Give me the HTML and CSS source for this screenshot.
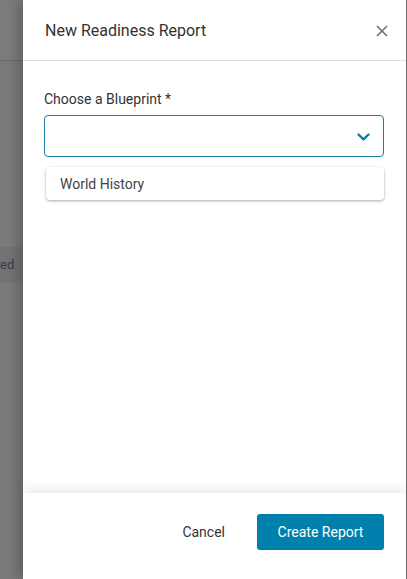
FILE: index.html
```html
<!DOCTYPE html>
<html>
<head>
<meta charset="utf-8">
<link rel="stylesheet" href="styles.css">
</head>
<body>
<div class="page">
  <div class="backdrop">
    <div class="bd-header"></div>
    <div class="bd-spacer"></div>
    <div class="bd-row">ed</div>
  </div>
  <div class="panel">
    <div class="panel-header">
      <div class="title">New Readiness Report</div>
      <svg class="close" width="12" height="12" viewBox="0 0 12 12"><path d="M1 1 L11 11 M11 1 L1 11" stroke="#6b6b6b" stroke-width="1.5" fill="none"/></svg>
    </div>
    <div class="panel-body">
      <div class="label">Choose a Blueprint *</div>
      <div class="select">
        <svg class="chev" width="13" height="8" viewBox="0 0 13 8"><path d="M1.5 1.5 L6.5 6.3 L11.5 1.5" stroke="#0a7ead" stroke-width="2.4" fill="none" stroke-linecap="round" stroke-linejoin="round"/></svg>
      </div>
      <div class="menu">
        <div class="menu-item">World History</div>
      </div>
    </div>
    <div class="panel-footer">
      <button class="btn-cancel">Cancel</button>
      <button class="btn-primary">Create Report</button>
    </div>
  </div>
  <div class="edge"></div>
</div>
</body>
</html>
```
FILE: styles.css
```css
html, body {
  margin: 0;
  padding: 0;
  height: 100%;
}
body {
  font-family: Roboto, "Liberation Sans", sans-serif;
  color: #333;
  overflow: hidden;
}
.page {
  display: flex;
  height: 579px;
}
.backdrop {
  width: 23px;
  flex: none;
  background: #7a7a7a;
  display: flex;
  flex-direction: column;
  overflow: hidden;
}
.bd-header {
  height: 60px;
  border-bottom: 1px solid #6a6a6a;
  background: #7b7b7b;
}
.bd-spacer {
  height: 186px;
}
.bd-row {
  height: 36px;
  background: #737373;
  font-size: 13px;
  line-height: 36px;
  color: #3a3a4a;
  white-space: nowrap;
  padding-left: 0;
}
.panel {
  flex: 1;
  background: #fff;
  display: flex;
  flex-direction: column;
  box-shadow: -6px 0 10px rgba(0,0,0,0.18);
  position: relative;
  z-index: 1;
}
.panel-header {
  height: 60px;
  border-bottom: 1px solid #dedede;
  display: flex;
  align-items: center;
  justify-content: space-between;
  padding: 0 18px 0 21px;
  flex: none;
}
.title {
  font-size: 16px;
  color: #333;
  padding-left: 1px;
  padding-top: 1px;
}
.close {
  display: block;
  margin-top: 2px;
}
.panel-body {
  flex: 1;
  padding: 28px 22px 0 21px;
}
.label {
  font-size: 14px;
  line-height: 20px;
  color: #333;
  margin-bottom: 6px;
}
.select {
  height: 40px;
  border: 1px solid #1a7fa8;
  border-radius: 4px;
  display: flex;
  align-items: center;
  justify-content: flex-end;
  padding-right: 13px;
}
.chev {
  display: block;
  margin-top: 1px;
}
.menu {
  margin: 10px 0 0 2px;
  height: 33px;
  border-radius: 4px;
  background: #fff;
  box-shadow: 0 1px 3px rgba(0,0,0,0.35);
  display: flex;
  align-items: center;
}
.menu-item {
  padding-left: 14px;
  font-size: 14px;
  color: #444;
}
.panel-footer {
  height: 86px;
  box-sizing: border-box;
  flex: none;
  display: flex;
  align-items: flex-start;
  justify-content: flex-end;
  padding: 21px 22px 0 0;
  box-shadow: 0 -5px 10px rgba(0,0,0,0.07);
  background: #fff;
}
button {
  font-family: Roboto, "Liberation Sans", sans-serif;
  font-size: 14px;
  border: none;
  cursor: pointer;
}
.btn-cancel {
  background: none;
  color: #333;
  padding: 0 16px;
  height: 36px;
  margin-right: 16px;
}
.btn-primary {
  background: #0080ad;
  color: #fff;
  height: 36px;
  width: 127px;
  border-radius: 3px;
  padding: 0;
}
.edge {
  width: 1px;
  flex: none;
  background: #6e6e6e;
}
```
